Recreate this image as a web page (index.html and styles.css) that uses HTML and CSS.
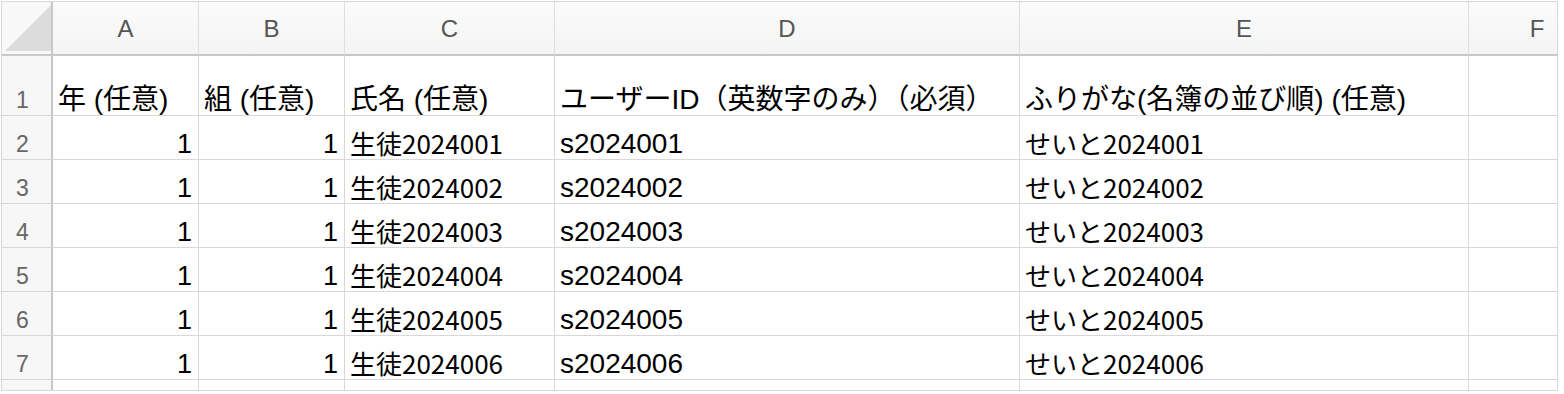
FILE: index.html
```html
<!DOCTYPE html>
<html lang="ja">
<head>
<meta charset="utf-8">
<title>Sheet</title>
<link rel="stylesheet" href="styles.css">
</head>
<body>
<div class="sheet">
  <div class="corner"><svg class="tri" width="46" height="46" viewBox="0 0 46 46"><polygon points="0,46 46,0 46,46" fill="#dcdcdc"/></svg></div>
  <div class="colhead">A</div>
  <div class="colhead">B</div>
  <div class="colhead">C</div>
  <div class="colhead">D</div>
  <div class="colhead">E</div>
  <div class="colhead last clipped">F</div>

  <div class="rowhead r1">1</div>
  <div class="cell r1">年 (任意)</div>
  <div class="cell r1">組 (任意)</div>
  <div class="cell r1">氏名 (任意)</div>
  <div class="cell r1">ユーザーID（英数字のみ）（必須）</div>
  <div class="cell r1">ふりがな(名簿の並び順) (任意)</div>
  <div class="cell r1 last"></div>

  <div class="rowhead">2</div>
  <div class="cell num">1</div>
  <div class="cell num">1</div>
  <div class="cell jp">生徒2024001</div>
  <div class="cell">s2024001</div>
  <div class="cell jp">せいと2024001</div>
  <div class="cell last"></div>

  <div class="rowhead">3</div>
  <div class="cell num">1</div>
  <div class="cell num">1</div>
  <div class="cell jp">生徒2024002</div>
  <div class="cell">s2024002</div>
  <div class="cell jp">せいと2024002</div>
  <div class="cell last"></div>

  <div class="rowhead">4</div>
  <div class="cell num">1</div>
  <div class="cell num">1</div>
  <div class="cell jp">生徒2024003</div>
  <div class="cell">s2024003</div>
  <div class="cell jp">せいと2024003</div>
  <div class="cell last"></div>

  <div class="rowhead">5</div>
  <div class="cell num">1</div>
  <div class="cell num">1</div>
  <div class="cell jp">生徒2024004</div>
  <div class="cell">s2024004</div>
  <div class="cell jp">せいと2024004</div>
  <div class="cell last"></div>

  <div class="rowhead">6</div>
  <div class="cell num">1</div>
  <div class="cell num">1</div>
  <div class="cell jp">生徒2024005</div>
  <div class="cell">s2024005</div>
  <div class="cell jp">せいと2024005</div>
  <div class="cell last"></div>

  <div class="rowhead">7</div>
  <div class="cell num">1</div>
  <div class="cell num">1</div>
  <div class="cell jp">生徒2024006</div>
  <div class="cell">s2024006</div>
  <div class="cell jp">せいと2024006</div>
  <div class="cell last"></div>

  <div class="rowhead stub"></div>
  <div class="cell stub"></div>
  <div class="cell stub"></div>
  <div class="cell stub"></div>
  <div class="cell stub"></div>
  <div class="cell stub"></div>
  <div class="cell stub last"></div>
</div>
</body>
</html>
```

FILE: styles.css
```css
html, body {
  margin: 0;
  padding: 0;
  background: #ffffff;
}

body {
  padding: 1px 0 0 1px;
  font-family: "Liberation Sans", "Noto Sans CJK JP", sans-serif;
  color: #000000;
}

.sheet {
  display: grid;
  grid-template-columns: 51px 146px 146px 210px 465px 449px 89px;
  grid-template-rows: 54px 60px repeat(6, 44px) 10px;
  width: max-content;
  border-top: 1px solid #d8d8d8;
  border-left: 1px solid #d8d8d8;
  border-bottom: 1px solid #d8d8d8;
}

.corner {
  position: relative;
  background: #f8f8f8;
  border-right: 2px solid #c8c8c8;
  border-bottom: 2px solid #c8c8c8;
  box-sizing: border-box;
}

.tri {
  position: absolute;
  left: 3px;
  bottom: 3px;
}

.colhead {
  background: linear-gradient(#fbfbfb, #f4f4f4);
  border-right: 1px solid #dedede;
  border-bottom: 2px solid #c8c8c8;
  box-sizing: border-box;
  display: flex;
  align-items: center;
  justify-content: center;
  font-size: 24px;
  color: #555555;
  padding-top: 2px;
}

.colhead.clipped {
  padding-left: 48px;
}

.rowhead {
  background: #f7f7f7;
  border-right: 2px solid #c8c8c8;
  border-bottom: 1px solid #d8d8d8;
  box-sizing: border-box;
  display: flex;
  align-items: flex-end;
  justify-content: center;
  font-size: 23px;
  line-height: 30px;
  padding: 0 8px 0 0;
  color: #666666;
}

.cell {
  border-right: 1px solid #d8d8d8;
  border-bottom: 1px solid #d8d8d8;
  box-sizing: border-box;
  display: flex;
  align-items: flex-end;
  font-size: 28px;
  line-height: 30px;
  padding: 0 6px 0 5px;
  white-space: nowrap;
  overflow: visible;
}

.cell.num {
  justify-content: flex-end;
  font-size: 27px;
}

.cell.jp {
  font-family: "Noto Sans CJK JP", sans-serif;
  font-size: 26px;
  padding-bottom: 1px;
}

.last {
  border-right: 1px solid #d8d8d8;
}

.stub {
  border-bottom: none;
}
```
